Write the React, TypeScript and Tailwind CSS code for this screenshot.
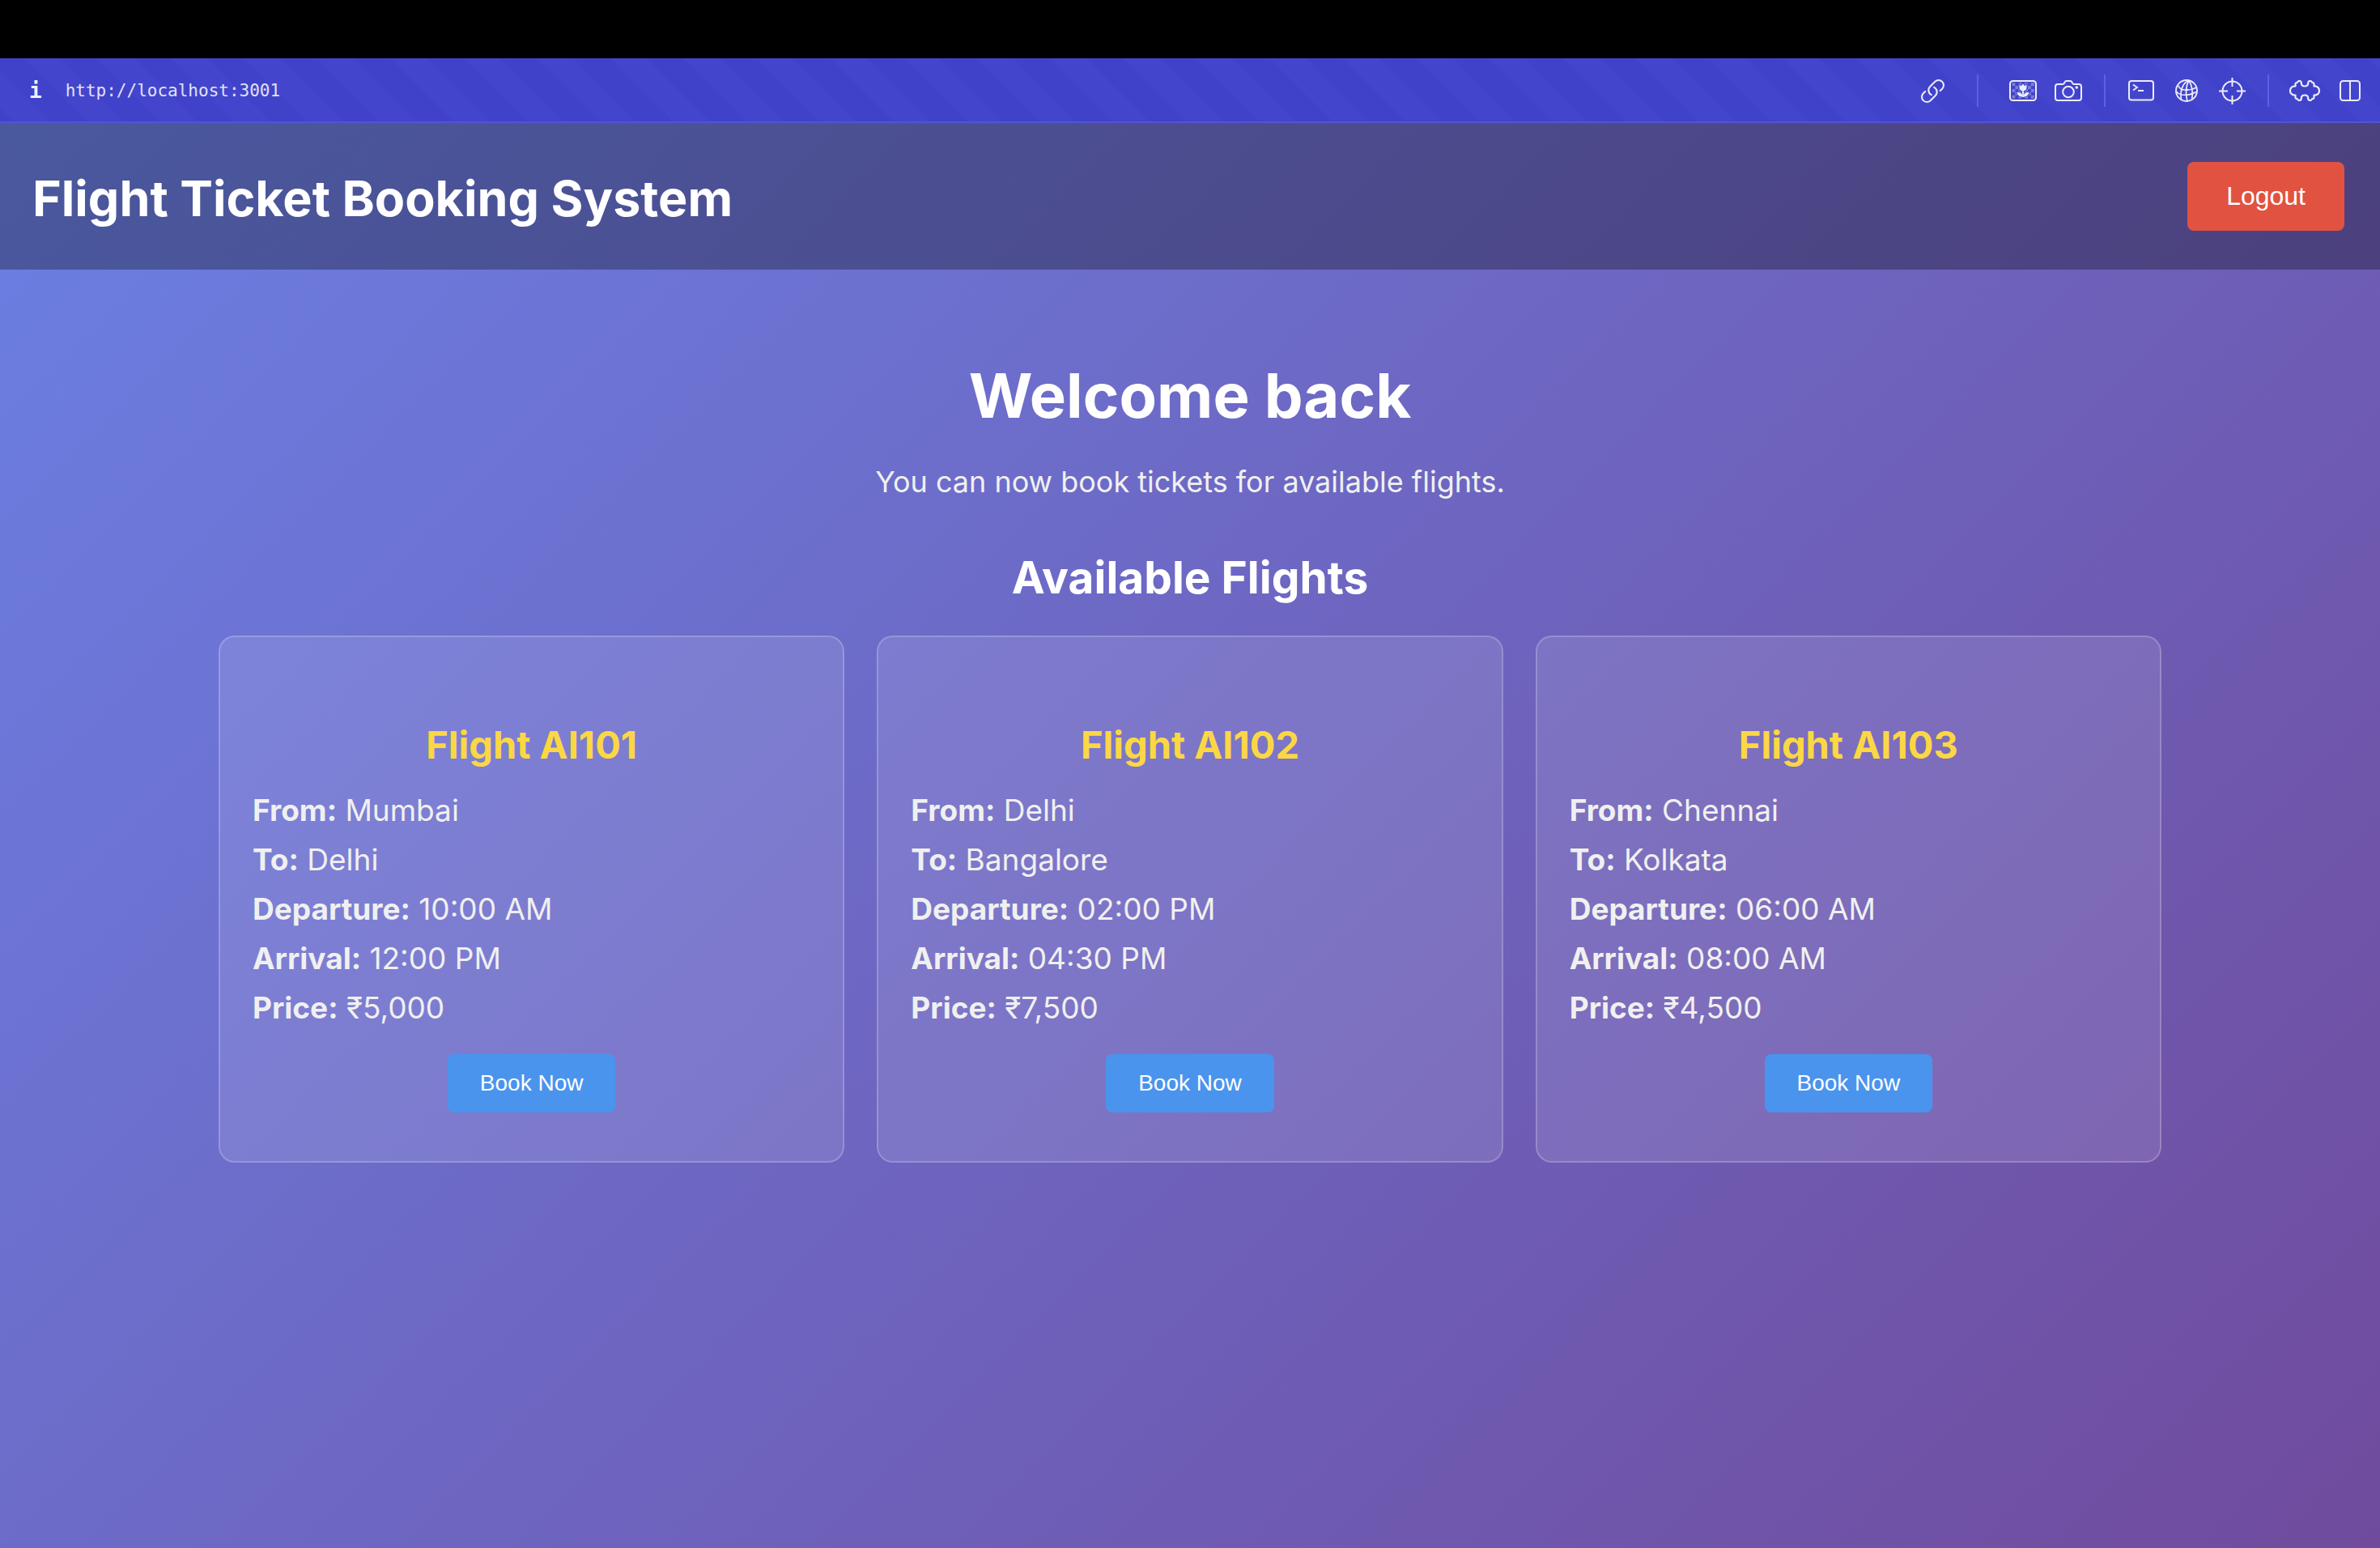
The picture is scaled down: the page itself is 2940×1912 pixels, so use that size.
import type { ReactNode } from "react";

type Flight = {
  code: string;
  from: string;
  to: string;
  departure: string;
  arrival: string;
  price: string;
};

const flights: Flight[] = [
  { code: "AI101", from: "Mumbai", to: "Delhi", departure: "10:00 AM", arrival: "12:00 PM", price: "₹5,000" },
  { code: "AI102", from: "Delhi", to: "Bangalore", departure: "02:00 PM", arrival: "04:30 PM", price: "₹7,500" },
  { code: "AI103", from: "Chennai", to: "Kolkata", departure: "06:00 AM", arrival: "08:00 AM", price: "₹4,500" },
];

function ToolButton({ label, children }: { label: string; children: ReactNode }) {
  return (
    <button type="button" aria-label={label} className="flex h-10 w-14 items-center justify-center text-[#ecebfc]">
      {children}
    </button>
  );
}

function LinkIcon() {
  return (
    <svg width="29" height="29" viewBox="1.5 1.5 21 21" fill="none" stroke="currentColor" strokeWidth="1.5" strokeLinecap="round" strokeLinejoin="round">
      <path d="M13.190 8.688a4.500 4.500 0 0 1 1.242 7.244l-4.500 4.500a4.500 4.500 0 0 1-6.364-6.364l1.757-1.757m13.350-.622 1.757-1.757a4.500 4.500 0 0 0-6.364-6.364l-4.500 4.500a4.500 4.500 0 0 0 1.242 7.244" />
    </svg>
  );
}

function ImageIcon() {
  const cells: [number, number][] = [];
  for (let row = 0; row < 5; row++) {
    for (let col = 0; col < 7; col++) {
      if ((row + col) % 2 === 0) cells.push([3.5 + col * 3.9, 3.2 + row * 3.9]);
    }
  }
  return (
    <svg width="34" height="26" viewBox="0 0 34 26" fill="none">
      {cells.map(([x, y]) => (
        <rect key={`${x}-${y}`} x={x} y={y} width="3.900" height="3.900" fill="currentColor" opacity="0.35" />
      ))}
      <g fill="currentColor" stroke="#4245ca" strokeWidth="2" paintOrder="stroke">
        <path d="M17 20.500c-4.500.2-6.500-1.600-7.500-5.500 4.300-.3 6.500 1.500 7.500 5.500zM17 20.500c4.500.2 6.500-1.600 7.500-5.500-4.300-.3-6.500 1.500-7.500 5.500z" />
        <path d="M12.500 5.500l2.300 1.700L17 4.500l2.200 2.700 2.300-1.700v3.800c0 2.400-1.800 4-4.500 4s-4.500-1.600-4.500-4z" />
      </g>
      <path d="M17 12v9" stroke="currentColor" strokeWidth="1.800" />
      <rect x="1" y="1" width="32" height="24" rx="3.500" stroke="currentColor" strokeWidth="2" />
    </svg>
  );
}

function CameraIcon() {
  return (
    <svg width="34" height="26" viewBox="0 0 34 26" fill="none" stroke="currentColor" strokeWidth="2" strokeLinejoin="round">
      <path d="M4 5h5.500c1.500 0 2.200-.5 2.700-1.600l.4-.9C13 1.500 13.500 1 14.500 1h5c1 0 1.500.5 1.900 1.500l.4.900C22.300 4.500 23 5 24.500 5H30c2 0 3 1 3 3v14c0 2-1 3-3 3H4c-2 0-3-1-3-3V8c0-2 1-3 3-3z" />
      <circle cx="17" cy="14.500" r="6.800" />
      <circle cx="27.300" cy="9" r="1.800" fill="currentColor" stroke="none" />
    </svg>
  );
}

function TerminalIcon() {
  return (
    <svg width="32" height="26" viewBox="0 0 32 26" fill="none" stroke="currentColor" strokeWidth="2">
      <rect x="1" y="1" width="30" height="23.500" rx="3" />
      <path d="M6 5.500l5 3.500-5 3.500M12 13h7" strokeWidth="1.800" />
    </svg>
  );
}

function GlobeIcon() {
  return (
    <svg width="28" height="28" viewBox="0 0 28 28" fill="none" stroke="currentColor" strokeWidth="1.700">
      <circle cx="14" cy="14" r="13" strokeWidth="1.900" />
      <path d="M17 1.300C10 4 5.500 13 7.500 25M17 1.300c-3.500 6-4.500 16-2 25.700M17 1.300c3.500 6 5.500 14 3.500 24" />
      <path d="M3.500 7.500c1 2.500 2.500 4 5 5 5.500 1.500 12 .5 18-2.500M1.200 15c2 2.500 4 3.500 7 4 6 .8 12.500-.5 17.500-3.500" />
      <circle cx="8" cy="12.500" r="1.400" fill="currentColor" stroke="none" />
      <circle cx="14.500" cy="13" r="1.400" fill="currentColor" stroke="none" />
      <circle cx="20.800" cy="18" r="1.400" fill="currentColor" stroke="none" />
    </svg>
  );
}

function CrosshairIcon() {
  return (
    <svg width="33" height="33" viewBox="0 0 33 33" fill="none" stroke="currentColor" strokeWidth="2">
      <circle cx="16.500" cy="16.500" r="12" />
      <path d="M16.500 0v11M16.500 22v11M0 16.500h11M22 16.500h11" />
    </svg>
  );
}

function PuzzleIcon() {
  return (
    <svg width="38" height="26" viewBox="0 0 38 26" fill="none" stroke="currentColor" strokeWidth="2.200" strokeLinejoin="round">
      <path d="M7.500 7.500V5c0-1.500.5-2 2-2h.3C10.200 1.700 11 1 12.300 1c1.700 0 2.500.9 2.500 2.500 0 2.500 1.500 4 4.200 4s4.200-1.500 4.200-4C23.200 1.900 24 1 25.700 1c1.300 0 2.100.7 2.500 2h.3c1.500 0 2 .5 2 2v2.500c4-.3 6.500 2 6.500 5.500s-2.500 5.800-6.500 5.500V21c0 1.500-.5 2-2 2h-.3c-.4 1.300-1.200 2-2.500 2-1.700 0-2.500-.9-2.500-2.500 0-2.500-1.500-4-4.200-4s-4.200 1.500-4.200 4c0 1.600-.8 2.500-2.500 2.500-1.300 0-2.100-.7-2.500-2h-.3c-1.500 0-2-.5-2-2v-2.500C3.500 18.800 1 16.500 1 13s2.500-5.800 6.500-5.500z" />
    </svg>
  );
}

function SplitIcon() {
  return (
    <svg width="26" height="26" viewBox="0 0 26 26" fill="none" stroke="currentColor" strokeWidth="2">
      <rect x="1" y="1" width="24" height="24" rx="3.500" />
      <path d="M13 1v24" />
    </svg>
  );
}

function Toolbar() {
  return (
    <div className="flex h-20 items-center border-b-2 border-[#5255d2] bg-[repeating-linear-gradient(45deg,#4043c9_0px,#4043c9_12px,#4346cc_12px,#4346cc_44px,#4043c9_44px,#4043c9_64px)] pt-0.5 pr-[9px] pl-9 font-['DejaVu_Sans_Mono',monospace]">
      <span className="text-[26px] leading-8 font-bold text-[#f0effd]">i</span>
      <a href="http://localhost:3001" className="ml-[29px] text-[21px] leading-8 text-[#e2e0f8]">
        http://localhost:3001
      </a>
      <div className="ml-auto flex items-center">
        <ToolButton label="Copy link"><LinkIcon /></ToolButton>
        <span className="mx-[27px] h-10 w-0.5 bg-[#5e61e3]" />
        <ToolButton label="Preview image"><ImageIcon /></ToolButton>
        <ToolButton label="Take screenshot"><CameraIcon /></ToolButton>
        <span className="mx-4 h-10 w-0.5 bg-[#5e61e3]" />
        <ToolButton label="Console"><TerminalIcon /></ToolButton>
        <ToolButton label="Network"><GlobeIcon /></ToolButton>
        <ToolButton label="Inspect element"><CrosshairIcon /></ToolButton>
        <span className="mx-4 h-10 w-0.5 bg-[#5e61e3]" />
        <ToolButton label="Extensions"><PuzzleIcon /></ToolButton>
        <ToolButton label="Split view"><SplitIcon /></ToolButton>
      </div>
    </div>
  );
}

function Detail({ label, value }: { label: string; value: string }) {
  return (
    <p>
      <strong className="font-bold">{label}:</strong> {value}
    </p>
  );
}

function FlightCard({ flight }: { flight: Flight }) {
  return (
    <article className="flex flex-col items-center rounded-[20px] border-2 border-white/20 bg-white/11 px-10 pt-[105px] pb-[60px]">
      <h3 className="text-[47px] leading-[56px] font-bold text-[#fbd743]">Flight {flight.code}</h3>
      <div className="mt-[22px] w-full text-[37px] leading-[61px] text-[#f0f0f0]">
        <Detail label="From" value={flight.from} />
        <Detail label="To" value={flight.to} />
        <Detail label="Departure" value={flight.departure} />
        <Detail label="Arrival" value={flight.arrival} />
        <Detail label="Price" value={flight.price} />
      </div>
      <button type="button" className="mt-[27px] rounded-lg bg-[#4a94ee] px-10 py-5 font-['Liberation_Sans',sans-serif] text-[28px] leading-8 text-white">
        Book Now
      </button>
    </article>
  );
}

export default function App() {
  return (
    <div className="flex min-h-screen flex-col bg-black pt-[72px] font-['Inter',sans-serif]">
      <Toolbar />
      <div className="flex flex-1 flex-col bg-[linear-gradient(135deg,#6b7fe3,#704b9d)]">
        <header className="flex items-center justify-between bg-black/30 py-12 pr-11 pl-10">
          <h1 className="pt-1 text-[61px] leading-[80px] font-bold text-white">Flight Ticket Booking System</h1>
          <button type="button" className="rounded-lg bg-[#e15241] px-12 py-6 font-['Liberation_Sans',sans-serif] text-[32px] leading-[37px] text-white">
            Logout
          </button>
        </header>
        <main className="flex flex-1 flex-col items-center px-10 pt-[115px]">
          <h2 className="text-[76px] leading-[80px] font-bold text-white">Welcome back</h2>
          <p className="mt-[37px] text-[36px] leading-[61px] text-[#f0f0f0]">
            You can now book tickets for available flights.
          </p>
          <h2 className="mt-[55px] text-[55px] leading-[64px] font-bold text-white">Available Flights</h2>
          <section className="mt-10 grid w-full max-w-[2400px] grid-cols-3 gap-10">
            {flights.map((flight) => (
              <FlightCard key={flight.code} flight={flight} />
            ))}
          </section>
        </main>
      </div>
    </div>
  );
}
